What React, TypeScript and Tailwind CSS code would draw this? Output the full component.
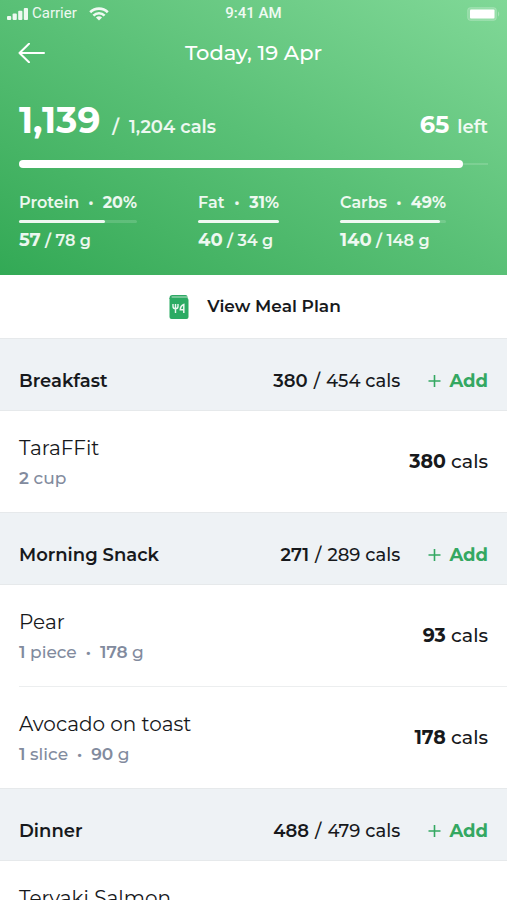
import type { ReactNode } from 'react'

type Food = { name: string; amount: ReactNode; cals: number }
type Meal = { name: string; eaten: number; goal: number; foods: Food[] }

const macros = [
  { name: 'Protein', share: 20, eaten: 57, goal: 78, width: 'w-[118px]' },
  { name: 'Fat', share: 31, eaten: 40, goal: 34, width: 'w-[81px]' },
  { name: 'Carbs', share: 49, eaten: 140, goal: 148, width: 'w-[106px]' },
]

const meals: Meal[] = [
  {
    name: 'Breakfast',
    eaten: 380,
    goal: 454,
    foods: [{ name: 'TaraFFit', amount: <Amount count={2} unit="cup" />, cals: 380 }],
  },
  {
    name: 'Morning Snack',
    eaten: 271,
    goal: 289,
    foods: [
      { name: 'Pear', amount: <Amount count={1} unit="piece" grams={178} />, cals: 93 },
      { name: 'Avocado on toast', amount: <Amount count={1} unit="slice" grams={90} />, cals: 178 },
    ],
  },
  {
    name: 'Dinner',
    eaten: 488,
    goal: 479,
    foods: [{ name: 'Teryaki Salmon', amount: <Amount count={1} unit="piece" grams={210} />, cals: 488 }],
  },
]

function Amount({ count, unit, grams }: { count: number; unit: string; grams?: number }) {
  return (
    <>
      <b className="font-semibold">{count}</b> {unit}
      {grams && (
        <>
          <span className="mx-[9px] font-bold">·</span>
          <b className="font-semibold">{grams}</b> g
        </>
      )}
    </>
  )
}

function StatusBar() {
  return (
    <div className="grid grid-cols-3 items-center h-[27px] px-[7px] text-[15px] text-white/90 font-['Roboto','Inter',sans-serif]">
      <div className="flex items-center gap-1">
        <svg className="w-[21px] h-3" viewBox="0 0 21 12" fill="currentColor" aria-hidden="true">
          <rect x="0" y="8" width="4.2" height="4" rx="1" />
          <rect x="5.6" y="5.5" width="4.2" height="6.5" rx="1" />
          <rect x="11.2" y="2.8" width="4.2" height="9.2" rx="1" />
          <rect x="16.8" y="0" width="4.2" height="12" rx="1" />
        </svg>
        <span>Carrier</span>
        <svg className="w-5 h-[14px] ml-2" viewBox="0 0 20 14" fill="none" stroke="currentColor" strokeWidth="2.6" aria-hidden="true">
          <path d="M1.2 5.2a12.6 12.6 0 0 1 17.6 0" />
          <path d="M4.4 8.6a8 8 0 0 1 11.2 0" />
          <path d="M10 13.6 6.9 10.6a4.5 4.5 0 0 1 6.2 0Z" fill="currentColor" stroke="none" />
        </svg>
      </div>
      <span className="text-center font-medium">9:41 AM</span>
      <svg className="w-[33px] h-[14px] justify-self-end" viewBox="0 0 33 14" aria-hidden="true">
        <rect x="0.5" y="0.5" width="29" height="13" rx="3" fill="#fff" fillOpacity="0.2" stroke="#fff" strokeOpacity="0.15" />
        <rect x="3" y="2.5" width="24.5" height="9" rx="1" fill="#fff" />
        <path d="M31 4.5c1.6.6 1.6 4.4 0 5Z" fill="#fff" fillOpacity="0.3" />
      </svg>
    </div>
  )
}

function Macro({ name, share, eaten, goal, width }: (typeof macros)[number]) {
  const filled = Math.min(100, (eaten / goal) * 100)
  return (
    <div className={`${width} whitespace-nowrap text-base leading-6 font-semibold text-white/90`}>
      <div className="flex justify-between">
        <span>{name}</span>
        <span>•</span>
        <b className="font-bold">{share}%</b>
      </div>
      <div className="my-[5px] h-[3px] rounded-full bg-white/15">
        <div className="h-full rounded-full bg-white/90" style={{ width: `${filled}%` }} />
      </div>
      <div>
        <b className="text-lg leading-6 font-bold">{eaten}</b> / {goal} g
      </div>
    </div>
  )
}

function MealPlanIcon() {
  return (
    <svg className="w-5 h-6" viewBox="0 0 20 24" fill="none" aria-hidden="true">
      <path d="M3.5 0H16.5A2 2 0 0 1 18.5 2V4H.5V3a3 3 0 0 1 3-3Z" fill="#2fa866" />
      <path d="M2.6 2h15.4" stroke="#a5dcb9" strokeWidth="1.2" />
      <path d="M.5 3h17a2 2 0 0 1 2 2V22a2 2 0 0 1-2 2h-15a2 2 0 0 1-2-2Z" fill="#2bab63" />
      <path d="M4 9v2.2a2.5 2.5 0 0 0 5 0V9M6.5 9v9" stroke="#fff" strokeOpacity=".9" strokeWidth="1.4" />
      <path d="M14.8 18V9.500c-2 .8-3.5 2.8-3.5 5.3h3.500" stroke="#fff" strokeOpacity=".9" strokeWidth="1.5" />
    </svg>
  )
}

function MealSection({ meal }: { meal: Meal }) {
  return (
    <section>
      <div className="flex items-center h-[73px] px-[19px] pt-3 border-y border-[#e6e9eb] bg-[#eef2f5] text-lg">
        <h2 className="font-semibold">{meal.name}</h2>
        <p className="ml-auto font-medium">
          <b className="font-semibold">{meal.eaten}</b>
          <span className="mx-[6px]">/</span>
          {meal.goal} cals
        </p>
        <button type="button" className="flex items-center gap-2 ml-7 font-bold text-[#34a862]">
          <svg className="w-[13px] h-3" viewBox="0 0 13 12" stroke="currentColor" strokeWidth="1.6" aria-hidden="true">
            <path d="M6.500 0v12M.5 6h12" />
          </svg>
          Add
        </button>
      </div>
      <ul className="pl-[19px] divide-y divide-[#eceeef]">
        {meal.foods.map((food) => (
          <li key={food.name} className="flex items-center justify-between pt-[23px] pb-[21px] pr-[19px] font-medium">
            <div>
              <h3 className="text-xl leading-7 font-normal">{food.name}</h3>
              <p className="mt-[3px] text-[17px] leading-[26px] text-[#828b9e]">{food.amount}</p>
            </div>
            <p className="text-[19px]">
              <b className="font-bold">{food.cals}</b> cals
            </p>
          </li>
        ))}
      </ul>
    </section>
  )
}

export default function App() {
  return (
    <main className="h-dvh overflow-y-auto [scrollbar-width:none] bg-white text-[#17191c] font-['Montserrat','Inter',sans-serif]">
      <header className="h-[275px] bg-linear-to-tr from-[#32a955] via-[#59c076] to-[#80d897] text-white">
        <StatusBar />
        <div className="grid grid-cols-[28px_1fr_28px] items-center h-[51px] px-[18px]">
          <button type="button" aria-label="Back">
            <svg className="w-7 h-5" viewBox="0 0 28 20" fill="none" stroke="currentColor" strokeWidth="2" strokeLinecap="round" strokeLinejoin="round" aria-hidden="true">
              <path d="M26 10H1.5M11 .8 1.5 10l9.5 9.200" />
            </svg>
          </button>
          <h1 className="text-center text-[21px] font-medium">Today, 19 Apr</h1>
        </div>
        <div className="px-[19px] pt-5">
          <div className="flex items-baseline justify-between text-lg font-semibold text-white/90">
            <p>
              <b className="mr-[7px] text-4xl leading-[44px] font-bold text-white">1,139</b>{' '}
              <span className="mr-[10px]">/</span>1,204 cals
            </p>
            <p>
              <b className="mr-[3px] text-2xl font-bold text-white">65</b> left
            </p>
          </div>
          <div className="flex items-center h-2 mt-[18px]">
            <div className="h-2 rounded-full bg-white" style={{ width: `${(1139 / 1204) * 100}%` }} />
            <div className="flex-1 h-[2px] bg-white/15" />
          </div>
          <div className="flex gap-[61px] mt-[23px]">
            {macros.map((macro) => (
              <Macro key={macro.name} {...macro} />
            ))}
          </div>
        </div>
      </header>
      <a href="#meal-plan" className="flex items-center justify-center gap-[18px] h-[63px] pt-px pl-[3px] text-[17px] font-semibold">
        <MealPlanIcon />
        View Meal Plan
      </a>
      {meals.map((meal) => (
        <MealSection key={meal.name} meal={meal} />
      ))}
    </main>
  )
}
